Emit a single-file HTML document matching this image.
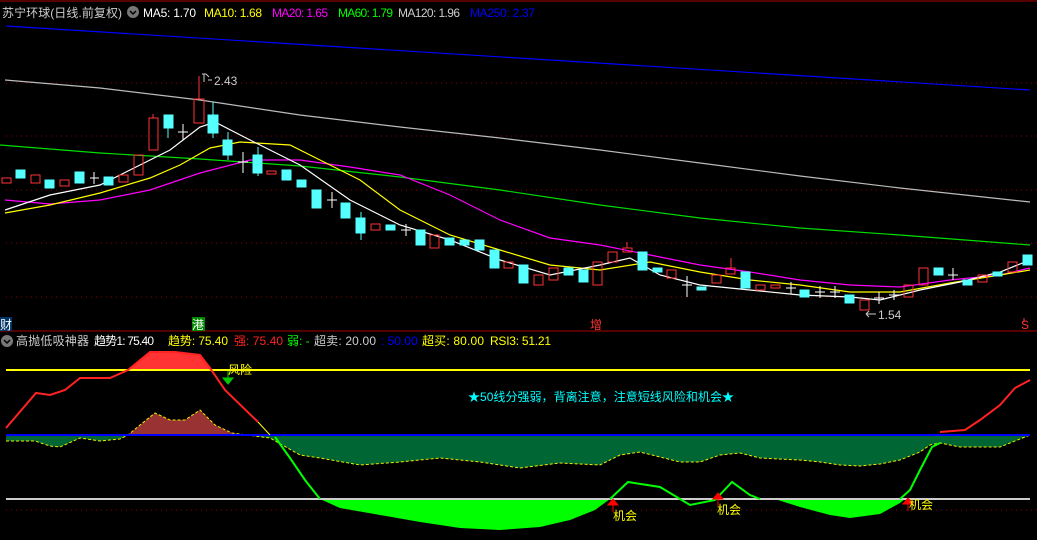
<!DOCTYPE html>
<html><head><meta charset="utf-8"><style>
html,body{margin:0;padding:0;background:#000;width:1037px;height:540px;overflow:hidden}
svg{display:block}
text{font-family:"Liberation Sans","Noto Sans CJK SC",sans-serif;font-size:12px}
</style></head><body>
<svg width="1037" height="540" viewBox="0 0 1037 540" xmlns="http://www.w3.org/2000/svg">
<rect width="1037" height="540" fill="#000"/>
<line x1="0" y1="1" x2="1037" y2="1" stroke="#a00" stroke-width="1"/>
<g stroke="#800" stroke-dasharray="1,4" stroke-width="1">
<line x1="6" y1="83" x2="1037" y2="83"/><line x1="6" y1="136" x2="1037" y2="136"/><line x1="6" y1="190" x2="1037" y2="190"/><line x1="6" y1="243" x2="1037" y2="243"/><line x1="6" y1="297" x2="1037" y2="297"/><line x1="6" y1="510" x2="1037" y2="510"/>
</g>
<line x1="0" y1="331" x2="1037" y2="331" stroke="#a00"/>
<!-- header -->
<text x="2" y="17" fill="#ccc" font-size="13" textLength="120">苏宁环球(日线.前复权)</text>
<circle cx="133" cy="12" r="6" fill="#777"/><path d="M130 11l3 3 3-3" stroke="#000" fill="none" stroke-width="1.5"/>
<text x="143" y="17" fill="#fff" textLength="53">MA5: 1.70</text>
<text x="204" y="17" fill="#ff0" textLength="58">MA10: 1.68</text>
<text x="272" y="17" fill="#f0f" textLength="56">MA20: 1.65</text>
<text x="338" y="17" fill="#0f0" textLength="55">MA60: 1.79</text>
<text x="398" y="17" fill="#ccc" textLength="62">MA120: 1.96</text>
<text x="470" y="17" fill="#00f" textLength="65">MA250: 2.37</text>
<!-- MAs -->
<g fill="none" stroke-width="1.2">
<polyline stroke="#00f" points="6,26 1030,90"/>
<polyline stroke="#bbb" points="5,80 100,88 200,100 300,115 400,127 500,138 600,150 700,163 800,176 900,188 1030,202"/>
<polyline stroke="#0d0" points="0,145 100,153 200,159 300,166 400,177 500,190 600,205 700,218 800,228 900,235 1030,245"/>
<polyline stroke="#f0f" points="5,200 50,204 100,200 150,190 200,173 250,160 300,160 350,167 400,175 450,195 500,220 550,238 600,245 650,255 700,265 750,272 800,280 850,285 900,287 950,280 1000,275 1030,268"/>
<polyline stroke="#ff0" points="5,213 50,205 100,193 150,178 180,165 210,148 240,142 290,145 320,160 360,180 400,210 450,235 500,250 550,265 600,270 650,262 700,272 750,280 800,285 850,292 900,292 950,283 1000,275 1030,270"/>
<polyline stroke="#fff" points="5,210 50,195 100,185 140,165 170,150 200,127 215,122 250,140 300,165 350,200 400,225 450,240 500,260 550,275 600,265 630,258 660,275 700,285 750,290 800,295 850,297 880,300 920,290 960,282 1000,272 1030,260"/>
</g>
<!-- candles -->
<g stroke-width="1">
<g stroke="#f33" fill="none">
<rect x="2" y="178" width="9" height="5"/><rect x="31" y="175" width="9" height="8"/><rect x="60" y="180" width="9" height="6"/><rect x="119" y="175" width="9" height="7"/><rect x="134" y="155" width="9" height="20"/><rect x="149" y="118" width="9" height="32"/><line x1="153" y1="114" x2="153" y2="118"/><rect x="194" y="99" width="10" height="24"/><line x1="199" y1="76" x2="199" y2="99"/><rect x="267" y="171" width="9" height="3"/><rect x="371" y="224" width="9" height="6"/><rect x="430" y="235" width="9" height="13"/><rect x="504" y="262" width="9" height="6"/><rect x="534" y="275" width="9" height="10"/><rect x="549" y="268" width="9" height="12"/><rect x="593" y="262" width="9" height="23"/><rect x="608" y="252" width="9" height="10"/><rect x="623" y="248" width="9" height="4"/><line x1="627" y1="242" x2="627" y2="248"/><rect x="667" y="270" width="9" height="8"/><rect x="712" y="275" width="9" height="8"/><rect x="726" y="268" width="9" height="6"/><line x1="731" y1="258" x2="731" y2="268"/><rect x="756" y="285" width="9" height="5"/><rect x="771" y="285" width="9" height="3"/><rect x="860" y="300" width="9" height="10"/><rect x="904" y="285" width="9" height="12"/><rect x="919" y="268" width="9" height="17"/><rect x="978" y="275" width="9" height="7"/><rect x="1008" y="262" width="9" height="10"/>
</g>
<g fill="#5ff" stroke="#5ff">
<rect x="16" y="170" width="9" height="8"/><rect x="45" y="180" width="9" height="8"/><rect x="75" y="172" width="9" height="11"/><rect x="104" y="177" width="9" height="8"/><rect x="164" y="115" width="9" height="13"/><line x1="168" y1="128" x2="168" y2="138"/><rect x="208" y="115" width="10" height="18"/><line x1="213" y1="102" x2="213" y2="138"/><rect x="223" y="140" width="9" height="15"/><line x1="228" y1="132" x2="228" y2="160"/><rect x="253" y="155" width="9" height="18"/><line x1="258" y1="147" x2="258" y2="176"/><rect x="282" y="170" width="9" height="10"/><rect x="297" y="180" width="9" height="7"/><rect x="312" y="190" width="9" height="18"/><rect x="341" y="203" width="9" height="15"/><rect x="356" y="218" width="9" height="15"/><line x1="361" y1="212" x2="361" y2="240"/><rect x="386" y="225" width="9" height="5"/><rect x="416" y="230" width="9" height="15"/><rect x="445" y="238" width="9" height="7"/><rect x="460" y="240" width="9" height="5"/><rect x="475" y="240" width="9" height="10"/><rect x="490" y="250" width="9" height="18"/><rect x="519" y="265" width="9" height="18"/><rect x="564" y="268" width="9" height="7"/><rect x="579" y="270" width="9" height="12"/><rect x="638" y="252" width="9" height="18"/><rect x="653" y="268" width="9" height="4"/><rect x="697" y="287" width="9" height="3"/><rect x="741" y="272" width="9" height="16"/><rect x="800" y="290" width="9" height="7"/><rect x="845" y="295" width="9" height="8"/><rect x="934" y="268" width="9" height="7"/><rect x="963" y="280" width="9" height="5"/><rect x="993" y="272" width="9" height="4"/><rect x="1023" y="255" width="9" height="10"/>
</g>
<g stroke="#fff">
<path d="M90 178h9M94 172v12M178 132h10M183 124v16M238 162h10M243 152v21M327 200h10M332 192v16M401 230h10M406 224v12M682 285h10M687 276v21M786 288h10M791 282v12M815 292h10M820 286v12M830 292h10M835 286v12M874 298h10M879 292v12M889 295h10M894 290v10M948 275h10M953 268v12"/>
</g>
</g>
<path d="M202 74h4l3 3M204 74v8" stroke="#ccc" fill="none"/>
<line x1="208" y1="80" x2="212" y2="80" stroke="#ccc"/>
<text x="214" y="85" fill="#ccc">2.43</text>
<path d="M866 314h10M866 314l3-3M866 314l3 3" stroke="#ccc" fill="none"/>
<text x="878" y="319" fill="#ccc">1.54</text>
<rect x="0" y="317" width="12" height="14" fill="#036"/><text x="0" y="329" fill="#fff">财</text>
<rect x="192" y="317" width="13" height="14" fill="#080"/><text x="192" y="329" fill="#fff">港</text>
<text x="590" y="329" fill="#f33">增</text>
<text x="1021" y="329" fill="#f33">S</text>
<path d="M1024 318v4" stroke="#f33"/>
<!-- indicator header -->
<circle cx="7" cy="341" r="6" fill="#777"/><path d="M4 340l3 3 3-3" stroke="#000" fill="none" stroke-width="1.5"/>
<text x="16" y="345" fill="#ccc" font-size="13" textLength="73">高抛低吸神器</text>
<text x="94" y="345" fill="#fff" textLength="60">趋势1: 75.40</text>
<text x="168" y="345" fill="#ff0" textLength="60">趋势: 75.40</text>
<text x="234" y="345" fill="#f22" textLength="49">强: 75.40</text>
<text x="287" y="345" fill="#0f0">弱: -</text>
<text x="314" y="345" fill="#ccc" textLength="62">超卖: 20.00</text>
<text x="381" y="345" fill="#00f">: 50.00</text>
<text x="422" y="345" fill="#ff0" textLength="62">超买: 80.00</text>
<text x="490" y="345" fill="#ff0" textLength="61">RSI3: 51.21</text>
<!-- fills -->
<polygon fill="#006633" points="6,435 1030,435 1030,435 1000,447 960,447 940,443 930,445 920,452 900,460 880,464 860,466 840,465 820,462 800,460 760,458 740,453 720,455 700,462 680,462 660,457 640,452 620,455 600,465 560,463 520,468 480,462 440,458 400,462 360,465 320,458 300,455 270,438 243,435 128,435 120,439 100,441 80,438 60,447 50,446 35,441 6,441"/>
<polygon fill="#993333" points="128,435 140,425 155,413 170,420 185,420 200,410 215,425 232,433 243,435"/>
<polygon fill="#f33" points="128,370 150,352 175,352 200,355 212,370"/>
<polygon fill="#00ff00" points="320,499 340,508 380,515 420,522 460,528 500,530 540,527 570,520 595,510 610,499"/>
<polygon fill="#00ff00" points="775,499 800,507 830,515 850,518 880,514 900,503 905,499"/>
<polyline fill="none" stroke="#ee0" stroke-dasharray="3,2" points="6,441 35,441 50,446 60,447 80,438 100,441 120,439 128,435 140,425 155,413 170,420 185,420 200,410 215,425 232,433 270,438 300,455 320,458 360,465 400,462 440,458 480,462 520,468 560,463 600,465 620,455 640,452 660,457 680,462 700,462 720,455 740,453 760,458 800,460 820,462 840,465 860,466 880,464 900,460 920,452 930,445 940,443 960,447 1000,447 1030,435"/>
<line x1="6" y1="370" x2="1030" y2="370" stroke="#ff0" stroke-width="2"/>
<line x1="6" y1="435" x2="1030" y2="435" stroke="#00f" stroke-width="2"/>
<line x1="6" y1="499" x2="1030" y2="499" stroke="#ccc" stroke-width="2"/>
<polyline fill="none" stroke="#f22" stroke-width="2" points="6,428 36,393 50,395 65,390 80,378 110,378 128,370 150,352 175,352 200,355 210,368 225,390 258,422"/>
<polyline fill="none" stroke="#ff0" points="258,422 270,435"/>
<polyline fill="none" stroke="#f22" stroke-width="2" points="940,432 965,430 980,420 1000,405 1015,388 1030,380"/>
<polyline fill="none" stroke="#0f0" stroke-width="2" points="275,437 290,458 305,480 320,499"/>
<polyline fill="none" stroke="#0f0" stroke-width="2" points="610,499 628,482 660,487 690,505 715,500 732,482 750,495 760,499"/>
<polyline fill="none" stroke="#0f0" stroke-width="2" points="900,499 910,490 920,470 932,447 940,443"/>
<text x="468" y="401" fill="#0ff" textLength="266">★50线分强弱，背离注意，注意短线风险和机会★</text>
<text x="228" y="374" fill="#ff0" font-size="13">风险</text>
<path d="M228 371v7M223 378h10l-5 6z" stroke="#0c0" fill="#0c0"/>
<g fill="#f00" stroke="#f00"><path d="M613 512v-8M608 505l5-6 5 6z"/><path d="M718 506v-8M713 499l5-6 5 6z"/><path d="M908 511v-8M903 504l5-6 5 6z"/></g>
<text x="613" y="520" fill="#ff0" font-size="13">机会</text>
<text x="717" y="514" fill="#ff0" font-size="13">机会</text>
<text x="909" y="509" fill="#ff0" font-size="13">机会</text>
</svg>
</body></html>
